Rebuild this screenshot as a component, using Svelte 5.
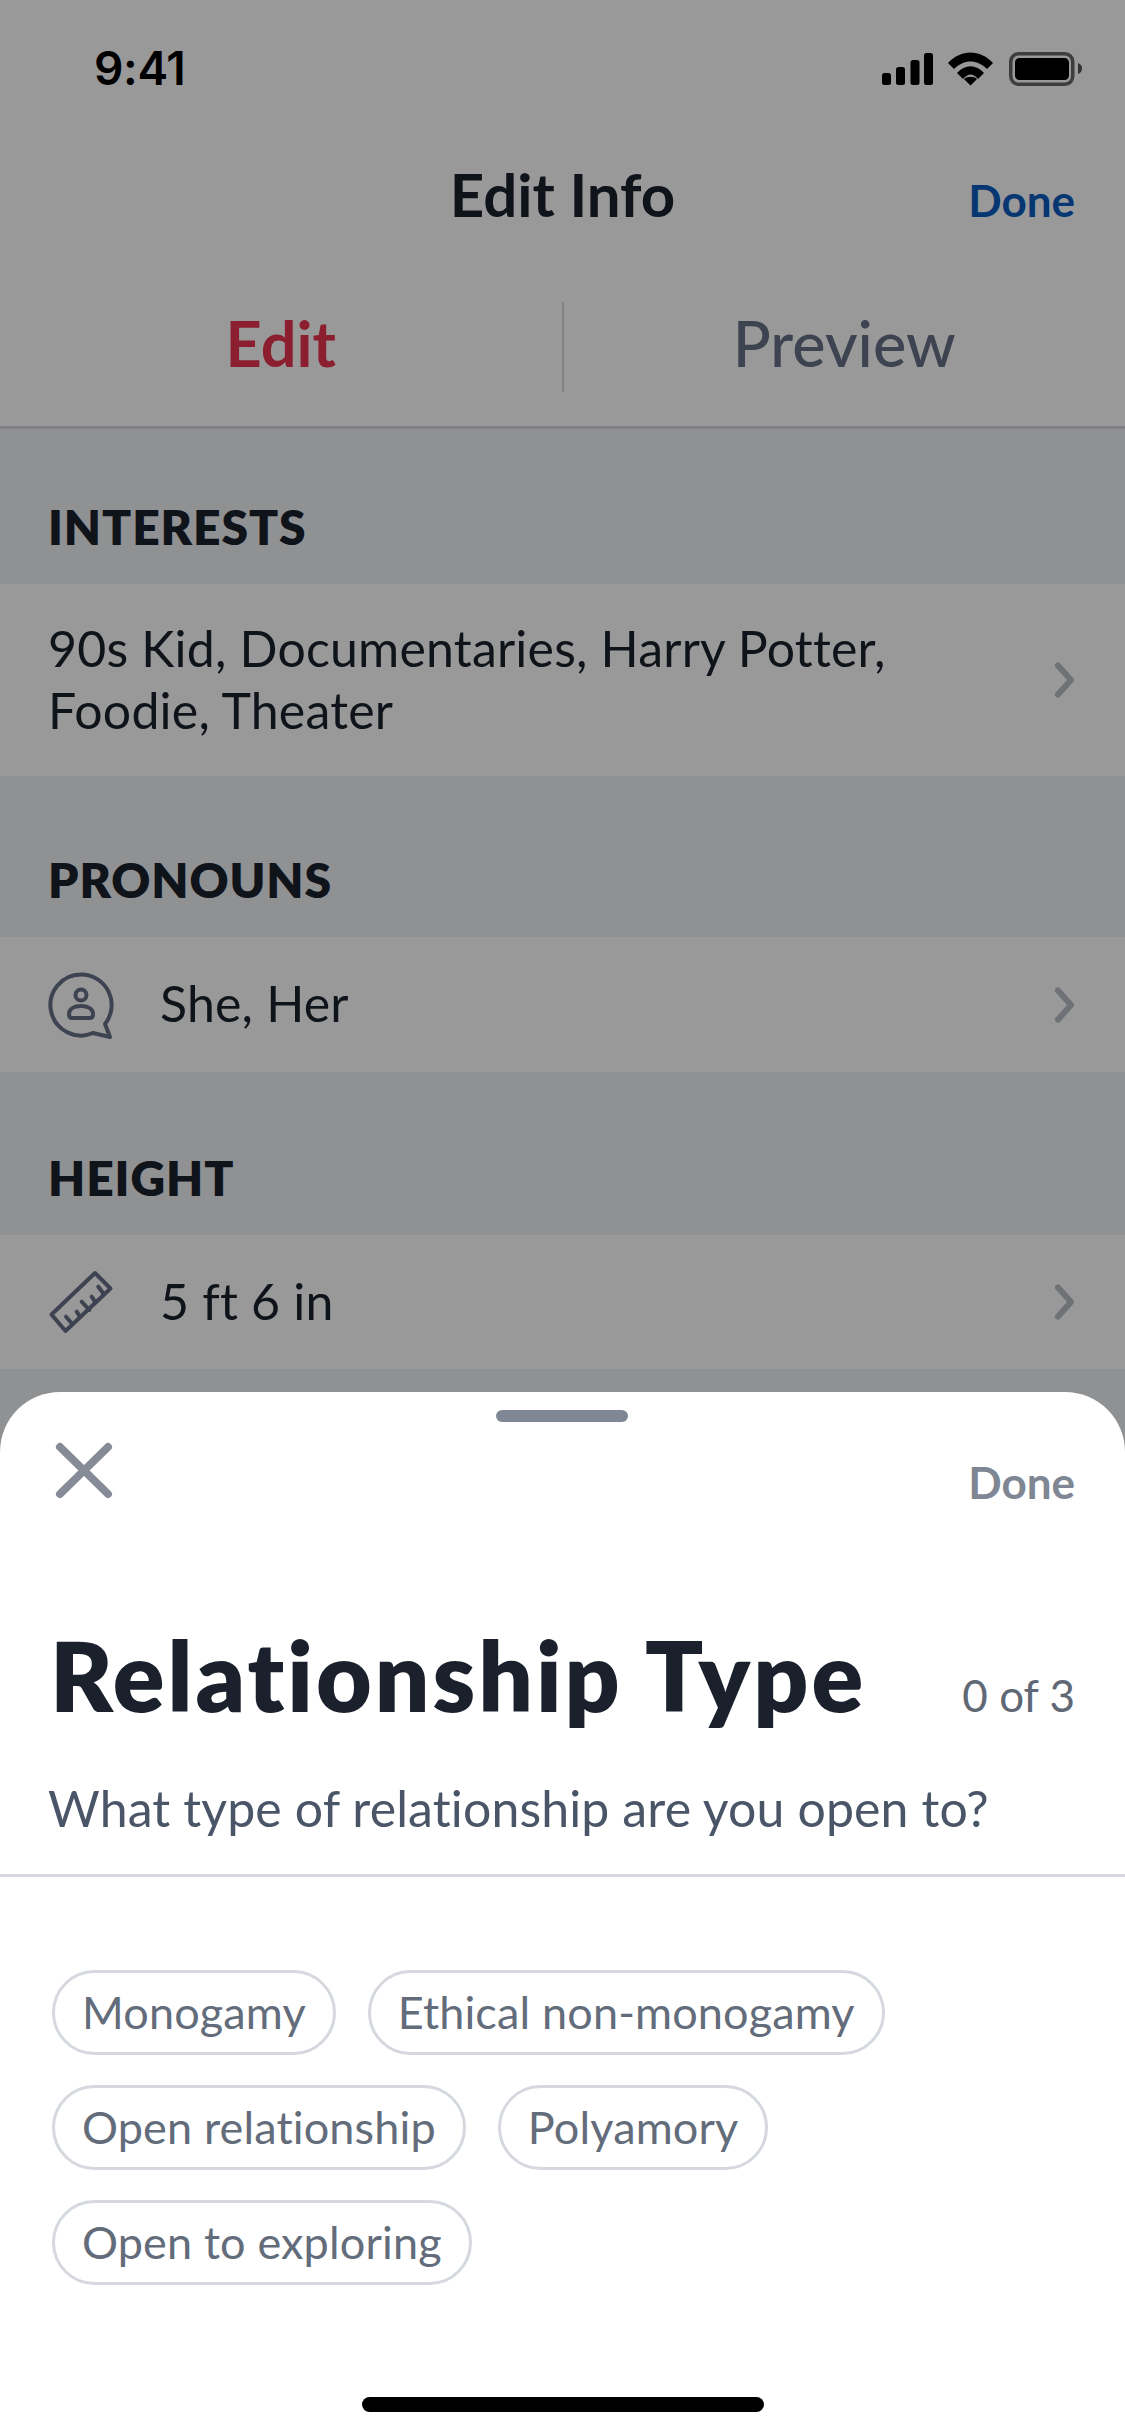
<script>
  const chips = [
    ['Monogamy', 'Ethical non-monogamy'],
    ['Open relationship', 'Polyamory'],
    ['Open to exploring']
  ];
</script>

<div class="screen">
  <header class="status">
    <span class="time">9:41</span>
    <svg class="sys" width="200" height="34" viewBox="0 0 200 34">
      <rect x="0" y="21" width="9" height="12" rx="2.500" fill="#000" />
      <rect x="14" y="15" width="9" height="18" rx="2.500" fill="#000" />
      <rect x="28.500" y="8" width="9" height="25" rx="2.500" fill="#000" />
      <rect x="42" y="1" width="9" height="32" rx="2.500" fill="#000" />
      <path d="M66 11 C79 -3 98 -3 111 11 L105 17 C95 7 82 7 72 17 Z M75 21 C83 12 94 12 102 21 L96 27 C91 21 86 21 81 27 Z M82 27 C85 24 92 24 95 27 L88.500 33.500 Z" fill="#000" />
      <rect x="128.750" y="1.750" width="62" height="30.500" rx="8" fill="none" stroke="#666" stroke-width="3.500" />
      <rect x="133" y="6" width="54" height="22" rx="4.500" fill="#000" />
      <path d="M196 11 C199 12 200 14 200 16.500 C200 19 199 21 196 22 Z" fill="#555" />
    </svg>
  </header>

  <div class="nav">
    <h1>Edit Info</h1>
    <span class="nav-done">Done</span>
  </div>

  <div class="tabs">
    <div class="tab active">Edit</div>
    <div class="tab-sep"></div>
    <div class="tab">Preview</div>
  </div>

  <section class="s1">
    <h2>INTERESTS</h2>
    <div class="row tall">
      <p>90s Kid, Documentaries, Harry Potter,<br />Foodie, Theater</p>
      <svg class="chev" width="26" height="40" viewBox="0 0 26 40"><path d="M7 5.500 L20 20 L7 34.500" /></svg>
    </div>
  </section>

  <section class="s2">
    <h2>PRONOUNS</h2>
    <div class="row">
      <svg class="ico" width="70" height="70" viewBox="0 0 70 70" fill="none">
        <path d="M35 4.500 A30.500 30.500 0 1 0 47 63 L64 67 L59 54 A30.500 30.500 0 0 0 35 4.500 Z" />
        <circle cx="35" cy="25" r="5.500" />
        <path d="M23 44 C23 39 28 36 35 36 C42 36 47 39 47 44 C47 47 46 48 44 48 L26 48 C24 48 23 47 23 44 Z" />
      </svg>
      <p class="lbl">She, Her</p>
      <svg class="chev" width="26" height="40" viewBox="0 0 26 40"><path d="M7 5.500 L20 20 L7 34.500" /></svg>
    </div>
  </section>

  <section class="s3">
    <h2>HEIGHT</h2>
    <div class="row">
      <svg class="ico" width="70" height="70" viewBox="0 0 70 70" fill="none">
        <path d="M49 6 L64.500 21.500 L19.500 64 L5.500 47.500 Z" />
        <path d="M20 49.700 L25.700 56.300 M30.700 44.700 L34 49.700 M35.700 34.700 L43.300 43 M45.700 29.700 L49 34.700 M52.300 19.700 L58 27.300" />
      </svg>
      <p class="lbl">5 ft 6 in</p>
      <svg class="chev" width="26" height="40" viewBox="0 0 26 40"><path d="M7 5.500 L20 20 L7 34.500" /></svg>
    </div>
  </section>

  <div class="scrim"></div>

  <aside class="sheet">
    <div class="handle"></div>
    <div class="sheet-top">
      <svg width="62" height="62" viewBox="0 0 62 62"><path d="M7 7 L55 54 M55 7 L7 54" /></svg>
      <span class="sheet-done">Done</span>
    </div>
    <div class="title-row">
      <h3>Relationship Type</h3>
      <span class="count">0 of 3</span>
    </div>
    <p class="sub">What type of relationship are you open to?</p>
    <div class="chips">
      {#each chips as line}
        <div class="chip-line">
          {#each line as c}
            <span class="chip">{c}</span>
          {/each}
        </div>
      {/each}
    </div>
    <div class="home"></div>
  </aside>
</div>

<style>
  :global(body) { margin: 0; }
  .screen {
    position: relative;
    width: 1125px;
    height: 2436px;
    overflow: hidden;
    background: #f0f2f4;
    font-family: Lato, "Open Sans", sans-serif;
    font-variant-ligatures: none;
    color: #1a202c;
  }
  .status {
    height: 136px;
    background: #fff;
    display: flex;
    justify-content: space-between;
    align-items: center;
    padding: 0 43px 0 94px;
    box-sizing: border-box;
  }
  .time { font: 600 46px Inter, sans-serif; color: #000; letter-spacing: -0.3px; }
  .sys { display: block; margin-top: 2px; }
  .nav {
    height: 132px;
    background: #fff;
    position: relative;
    display: flex;
    justify-content: center;
    align-items: center;
    padding-bottom: 16px;
    box-sizing: border-box;
  }
  h1 { margin: 0; font-size: 60px; font-weight: 700; }
  .nav-done {
    position: absolute;
    right: 50px;
    top: 38px;
    font-size: 44px;
    font-weight: 700;
    color: #0a5cbf;
  }
  .tabs {
    height: 158px;
    background: #fff;
    display: flex;
    align-items: center;
    border-bottom: 3px solid #d5d8de;
  }
  .tab {
    flex: 1;
    text-align: center;
    font-size: 63px;
    font-weight: 500;
    color: #667085;
    padding-bottom: 10px;
  }
  .tab.active { color: #e8324f; font-weight: 700; }
  .tab-sep { width: 2px; height: 90px; background: #d5d8de; }
  h2 {
    margin: 0;
    display: flex;
    align-items: flex-end;
    padding: 0 48px 29px;
    box-sizing: border-box;
    font-size: 48px;
    font-weight: 800;
    letter-spacing: 0.9px;
  }
  .s1 h2 { height: 155px; }
  .s2 h2 { height: 161px; }
  .s3 h2 { height: 163px; }
  .row {
    background: #fff;
    height: 134px;
    display: flex;
    align-items: center;
    padding: 0 48px;
  }
  .s2 .row { height: 135px; }
  .row.tall { height: 192px; }
  .row p { margin: 0 0 3px; flex: 1; font-size: 50px; line-height: 62px; letter-spacing: 0.2px; }
  .row .lbl { margin-left: 44px; }
  .chev path { fill: none; stroke: #b8bcc4; stroke-width: 6; stroke-linecap: round; stroke-linejoin: round; }
  .ico { margin-left: -2px; }
  .ico path, .ico circle { stroke: #667085; stroke-width: 4; stroke-linejoin: round; stroke-linecap: round; }
  .scrim { position: absolute; inset: 0; background: rgba(0, 0, 0, 0.4); }
  .sheet {
    position: absolute;
    left: 0;
    right: 0;
    top: 1392px;
    bottom: 0;
    background: #fff;
    border-radius: 60px 60px 0 0;
  }
  .handle { position: absolute; left: 496px; top: 18px; width: 132px; height: 12px; border-radius: 6px; background: #7f8794; }
  .sheet-top {
    display: flex;
    justify-content: space-between;
    align-items: flex-start;
    padding: 48px 50px 0 53px;
  }
  .sheet-top svg { display: block; }
  .sheet-top path { fill: none; stroke: #858c98; stroke-width: 8; stroke-linecap: round; }
  .sheet-done { font-size: 44px; font-weight: 700; color: #7f8794; margin-top: 16px; }
  .title-row {
    display: flex;
    justify-content: space-between;
    align-items: baseline;
    padding: 114px 50px 0;
  }
  h3 { margin: 0; font-size: 96px; font-weight: 800; line-height: 1.1; letter-spacing: 3px; }
  .count { font-size: 44px; color: #5f6875; }
  .sub {
    margin: 0;
    padding: 50px 48px 36px;
    font-size: 50px;
    letter-spacing: 0.12px;
    color: #4a5568;
    border-bottom: 3px solid #d5d8de;
  }
  .chips { display: flex; flex-direction: column; gap: 30px; padding: 93px 52px 0; }
  .chip-line { display: flex; gap: 32px; }
  .chip {
    height: 85px;
    box-sizing: border-box;
    display: flex;
    align-items: center;
    padding: 0 27px;
    border: 3px solid #d5d8de;
    border-radius: 43px;
    font-size: 45px;
    letter-spacing: 0.15px;
    color: #636c7a;
  }
  .home { position: absolute; left: 362px; top: 1005px; width: 402px; height: 15px; border-radius: 8px; background: #000; }
</style>
